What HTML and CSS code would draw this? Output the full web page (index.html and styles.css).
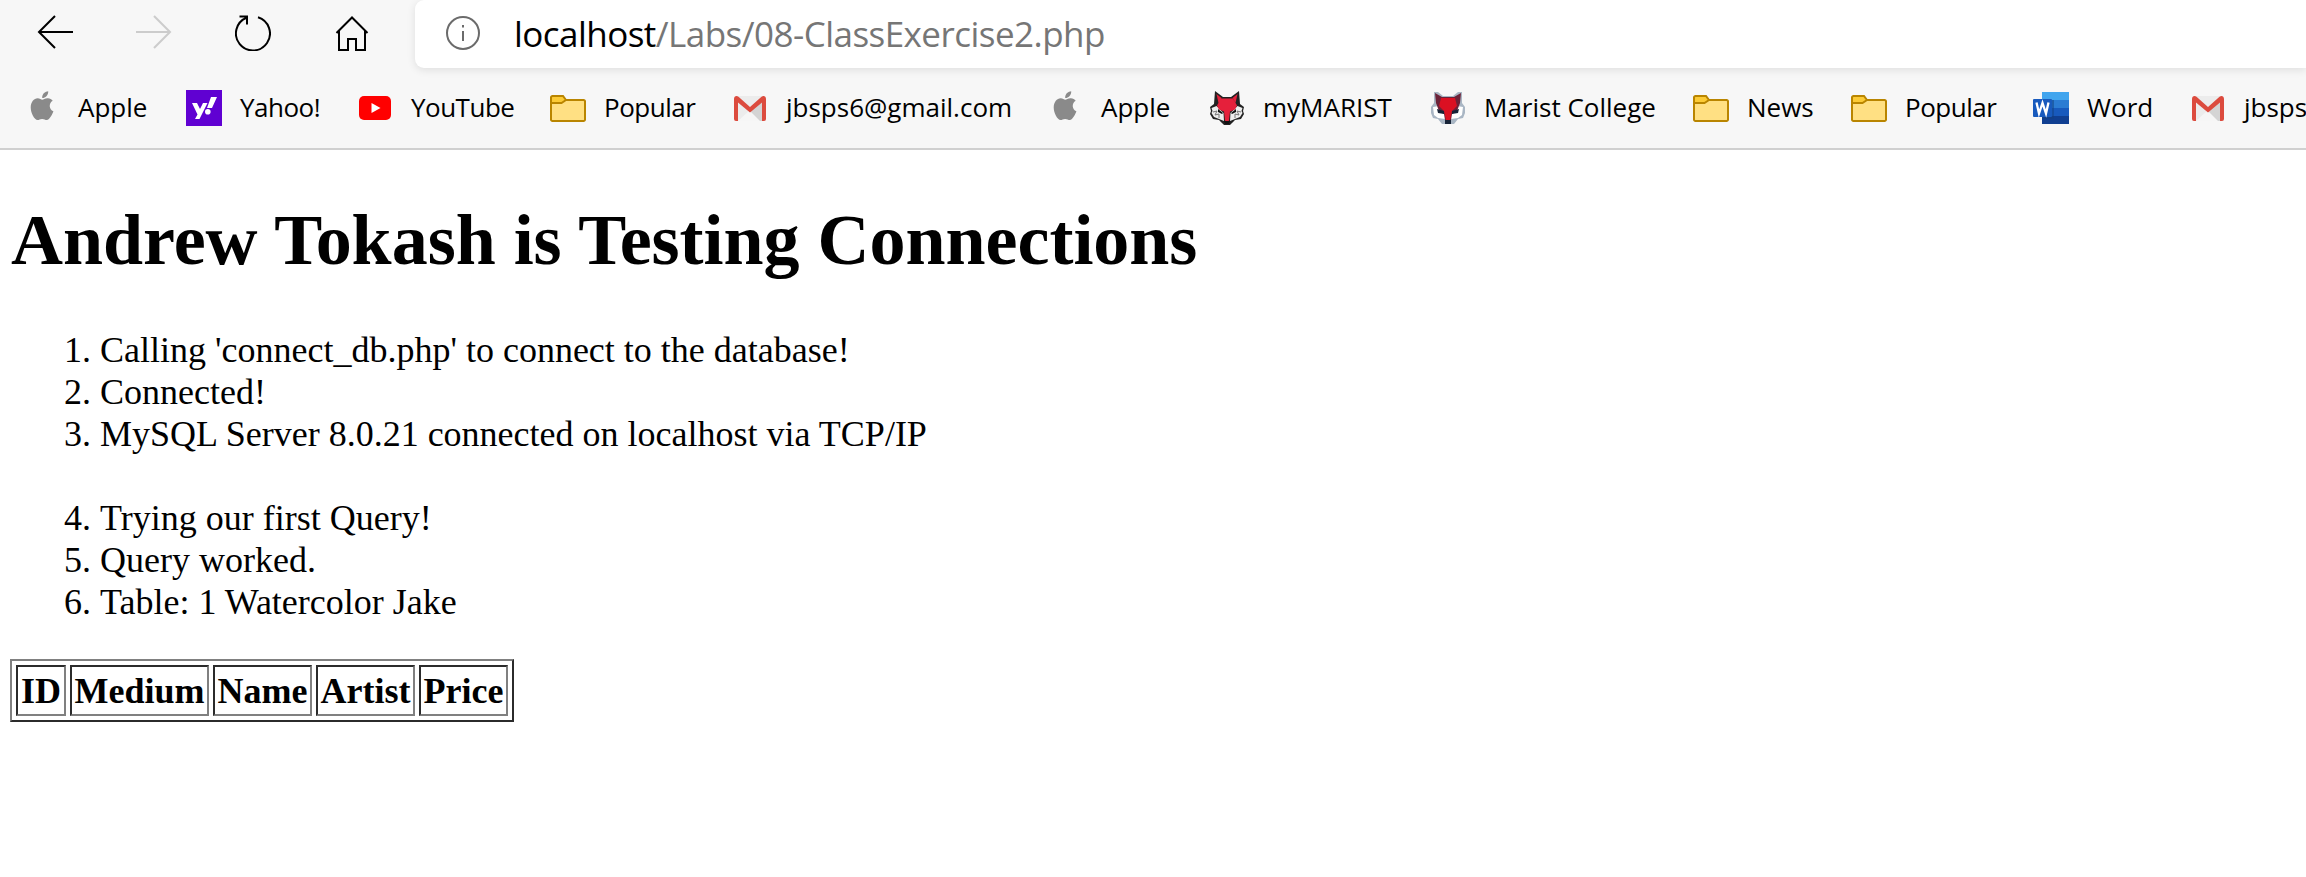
FILE: index.html
```html
<!DOCTYPE html>
<html lang="en">
<head>
<meta charset="utf-8">
<title>localhost/Labs/08-ClassExercise2.php</title>
<link rel="stylesheet" href="styles.css">
</head>
<body>
<svg class="symbols" width="0" height="0">
  <symbol id="apple" viewBox="0 0 36 36"><path fill="#8a8a8a" d="M24.2 1.2c.2 2-.7 3.800-1.800 5-1.200 1.300-2.800 1.900-4.200 1.800-.2-1.900.7-3.700 1.800-4.900 1.100-1.100 2.800-1.900 4.200-1.900zM18.300 9.700c1.200 0 2.900-1.700 5.600-1.500 2 .1 3.700 1 4.800 2.600-4.300 2.500-3.700 8.700.7 10.500-1 2.800-3.700 8.500-6.600 8.700-1.700 0-2.500-1.100-4.700-1.100s-3 1.100-4.500 1.200c-3.200-.2-6.900-7.300-6.900-12.600 0-5.700 3.300-9.200 7-9.300 1.900 0 3.500 1.500 4.600 1.500z"/></symbol>
  <symbol id="folder" viewBox="0 0 36 36"><path d="M1 8a2 2 0 0 1 2-2h10l4 4h16a1.500 1.500 0 0 1 1.500 1.500V30a1.500 1.500 0 0 1-1.500 1.500H2.500A1.500 1.500 0 0 1 1 30z" fill="#ffe083"/><path d="M1 13V8a2 2 0 0 1 2-2h10l3 4-4 3z" fill="#fccb36"/><path d="M1 7.500A1.500 1.500 0 0 1 2.500 6H13l3 4h17.500a1.500 1.500 0 0 1 1.500 1.500v18a1.500 1.500 0 0 1-1.500 1.500h-31A1.500 1.500 0 0 1 1 29.500zM1 13h10.500l4.500-3" fill="none" stroke="#b98500" stroke-width="2"/></symbol>
  <symbol id="gmail" viewBox="0 0 36 36"><path d="M4 6h28v25H4z" fill="#ececec"/><path d="M6 31l12-11 12 11z" fill="#f6f6f6"/><path d="M18 21 32 9v22h-4z" fill="#d4d4d4"/><path d="M2 9v20a2 2 0 0 0 2 2h2V12.500l12 10 12-10V31h2a2 2 0 0 0 2-2V9c0-3-2.500-3.800-4.500-2.300L18 17 6.500 6.700C4.500 5.200 2 6 2 9z" fill="#dc4b3e"/></symbol>
  <symbol id="fox" viewBox="0 0 36 36"><path d="M6 1l8 6h8l8-6 1 13 4 3-1 4 1 3-3 5-6 1-3 3-2 2h-6l-2-2-3-3-6-1-3-5 1-3-1-4 4-3z" fill="#222"/><path d="M2.500 18l5-2 7 7 .5 8-5-2-5-2-2.500-4 1-2zM33.500 18l-5-2-7 7-.5 8 5-2 5-2 2.500-4-1-2z" fill="#eee"/><path d="M4 22l4-1-2 4 4-1v4M32 22l-4-1 2 4-4-1v4" fill="none" stroke="#777"/><path d="M7.500 4l5 4-3 5zM28.500 4l-5 4 3 5zM12 8.500h12l4 7-2 4-5 2-1 9-2 2-2-2-1-9-5-2-2-4z" fill="#e5203b"/><path d="M9 19l5 4-1 1-4-2zM27 19l-5 4 1 1 4-2zM15 31h6l-1 3h-4z" fill="#111"/></symbol>
  <symbol id="fox-soft" viewBox="0 0 36 36"><path d="M4 2h4l5 4h10l5-4h4v11l3 4v6l-2 5-5 1-4 5h-12l-4-5-5-1-2-5v-6l3-4z" fill="#a9b6c4"/><path d="M3 17l6-1 6 8v5l-7-1-4-3zM33 17l-6-1-6 8v5l7-1 4-3z" fill="#fff"/><path d="M5 3l7 4h12l7-4-1 10-3 8-5 3-1 6h-6l-1-6-5-3-3-8z" fill="#6d2238"/><path d="M11 8h14l2 8-5 5-2 9h-4l-2-9-5-5z" fill="#db1022"/><path d="M7 19l7 2v3l-6-1zM29 19l-7 2v3l6-1zM15 30h6v4h-6z" fill="#172337"/></symbol>
</svg>
<header class="browser">
  <div class="toolbar">
    <nav class="nav">
      <svg class="nav-icon" viewBox="0 0 36 36"><path d="M36 17H2M18 1 2 17l16 16"/></svg>
      <svg class="nav-icon disabled" viewBox="0 0 36 36"><path d="M0 17h34M18 1l16 16-16 16"/></svg>
      <svg class="nav-icon" viewBox="0 0 36 36"><path d="M23 2.200A17 17 0 1 1 11.500 2.700M4.500 1.500H12v8"/></svg>
      <svg class="nav-icon" viewBox="0 0 36 36"><path d="M2.500 18 18 2.500 33.500 18M5 16v19h9V24h8v11h9V16"/></svg>
    </nav>
    <div class="address">
      <svg class="info" viewBox="0 0 36 36"><circle cx="18" cy="18" r="16"/><path d="M18 16v10M18 10v2.500"/></svg>
      <span class="url"><b class="host">localhost</b>/Labs/08-ClassExercise2.php</span>
    </div>
  </div>
  <div class="bookmarks">
    <a class="bm"><svg class="icon"><use href="#apple"/></svg><span class="label">Apple</span></a>
    <a class="bm"><svg class="icon" viewBox="0 0 36 36"><path fill="#6001d2" d="M0 0h36v36H0z"/><path d="M6 13h5l3 6 3-6h4.500l-8 16H9l2.500-4.500zM25 7h6l-5 11h-5z" fill="#fff"/><circle cx="21.800" cy="21.800" r="2.800" fill="#fff"/></svg><span class="label tight">Yahoo!</span></a>
    <a class="bm"><svg class="icon" viewBox="0 0 36 36"><rect x="2" y="6" width="32" height="24" rx="5" fill="red"/><path d="M14.500 13v10l9-5z" fill="#fff"/></svg><span class="label tight">YouTube</span></a>
    <a class="bm"><svg class="icon"><use href="#folder"/></svg><span class="label tight">Popular</span></a>
    <a class="bm"><svg class="icon"><use href="#gmail"/></svg><span class="label">jbsps6@gmail.com</span></a>
    <a class="bm"><svg class="icon"><use href="#apple"/></svg><span class="label">Apple</span></a>
    <a class="bm"><svg class="icon"><use href="#fox"/></svg><span class="label">myMARIST</span></a>
    <a class="bm"><svg class="icon"><use href="#fox-soft"/></svg><span class="label">Marist College</span></a>
    <a class="bm"><svg class="icon"><use href="#folder"/></svg><span class="label">News</span></a>
    <a class="bm"><svg class="icon"><use href="#folder"/></svg><span class="label tight">Popular</span></a>
    <a class="bm"><svg class="icon" viewBox="0 0 36 36"><path fill="#41a5ee" d="M9 2h27v8H9z"/><path fill="#2b7cd3" d="M9 10h27v8H9z"/><path fill="#185abd" d="M9 18h27v8H9z"/><path fill="#103f91" d="M9 26h27v8H9z"/><path fill="#124080" d="M9 10h12v19H9z" opacity=".5"/><rect y="9" width="19" height="18" rx="1" fill="#185abd"/><path d="M3.500 12.500 6 23.500 9.500 13l3.500 10.500 2.500-11" fill="none" stroke="#fff" stroke-width="2.300"/></svg><span class="label">Word</span></a>
    <a class="bm"><svg class="icon"><use href="#gmail"/></svg><span class="label">jbsps</span></a>
  </div>
</header>
<main class="page">
  <h1 class="title">Andrew Tokash is Testing Connections</h1>
  <ol class="log">
    <li>Calling 'connect_db.php' to connect to the database!</li>
    <li>Connected!</li>
    <li>MySQL Server 8.0.21 connected on localhost via TCP/IP<br><br></li>
    <li>Trying our first Query!</li>
    <li>Query worked.</li>
    <li>Table: 1 Watercolor Jake</li>
  </ol>
  <table class="prints">
    <tr><th class="id">ID</th><th class="medium">Medium</th><th class="name">Name</th><th class="artist">Artist</th><th class="price">Price</th></tr>
  </table>
</main>
</body>
</html>
```
FILE: styles.css
```css
body { margin: 0; background: #fff; color: #000; overflow: hidden; }
.symbols { display: none; }
.browser {
  box-sizing: border-box;
  height: 150px;
  background: #f7f7f7;
  border-bottom: 2px solid #d0d0d0;
  font-family: "Open Sans", "Noto Sans", sans-serif;
  overflow: hidden;
}
.toolbar { display: flex; height: 68px; }
.nav { display: flex; flex: none; gap: 63px; width: 378px; padding: 15px 0 0 37px; }
.nav-icon { flex: none; width: 36px; height: 36px; fill: none; stroke: #000; stroke-width: 2; }
.nav-icon.disabled { stroke: #ccc; }
.address {
  display: flex;
  flex: 1;
  align-items: center;
  background: #fff;
  border-radius: 9px 0 0 9px;
  box-shadow: 0 2px 9px rgba(0, 0, 0, .1);
}
.info { width: 36px; height: 36px; margin: 0 33px 2px 30px; fill: none; stroke: #6b6b6b; stroke-width: 2; }
.url { font-size: 35px; line-height: 68px; letter-spacing: -.54px; color: #767676; white-space: nowrap; }
.host { font-weight: 400; color: #000; }
.bookmarks {
  display: grid;
  grid-template-columns: 162px 171px 193px 182px 315px 162px 221px 263px 158px 182px 157px 140px;
  padding: 22px 0 0 24px;
}
.bm { display: flex; align-items: center; gap: 18px; height: 36px; }
.icon { flex: none; width: 36px; height: 36px; }
.label { margin-bottom: 2px; font-size: 26px; line-height: 36px; white-space: nowrap; }
.tight { letter-spacing: -.5px; }
.page { padding-left: 10px; font: 36px/42px "Liberation Serif", "Times New Roman", serif; }
.title { margin: 0; padding: 49px 0 0 1px; font-size: 72px; line-height: 83px; letter-spacing: -.02px; }
.log { margin: 0; padding: 47px 0 0 90px; }
.prints {
  margin-top: 36px;
  border: 2px solid;
  border-color: #808080 #2b2b2b #2b2b2b #808080;
  border-spacing: 4px;
  table-layout: fixed;
  width: 504px;
}
.prints th {
  box-sizing: border-box;
  height: 51px;
  padding: 0;
  border: 2px solid;
  border-color: #2b2b2b #808080 #808080 #2b2b2b;
}
.id { width: 50px; }
.medium { width: 139px; }
.name { width: 99px; }
.artist { width: 99px; }
.price { width: 89px; }
```
